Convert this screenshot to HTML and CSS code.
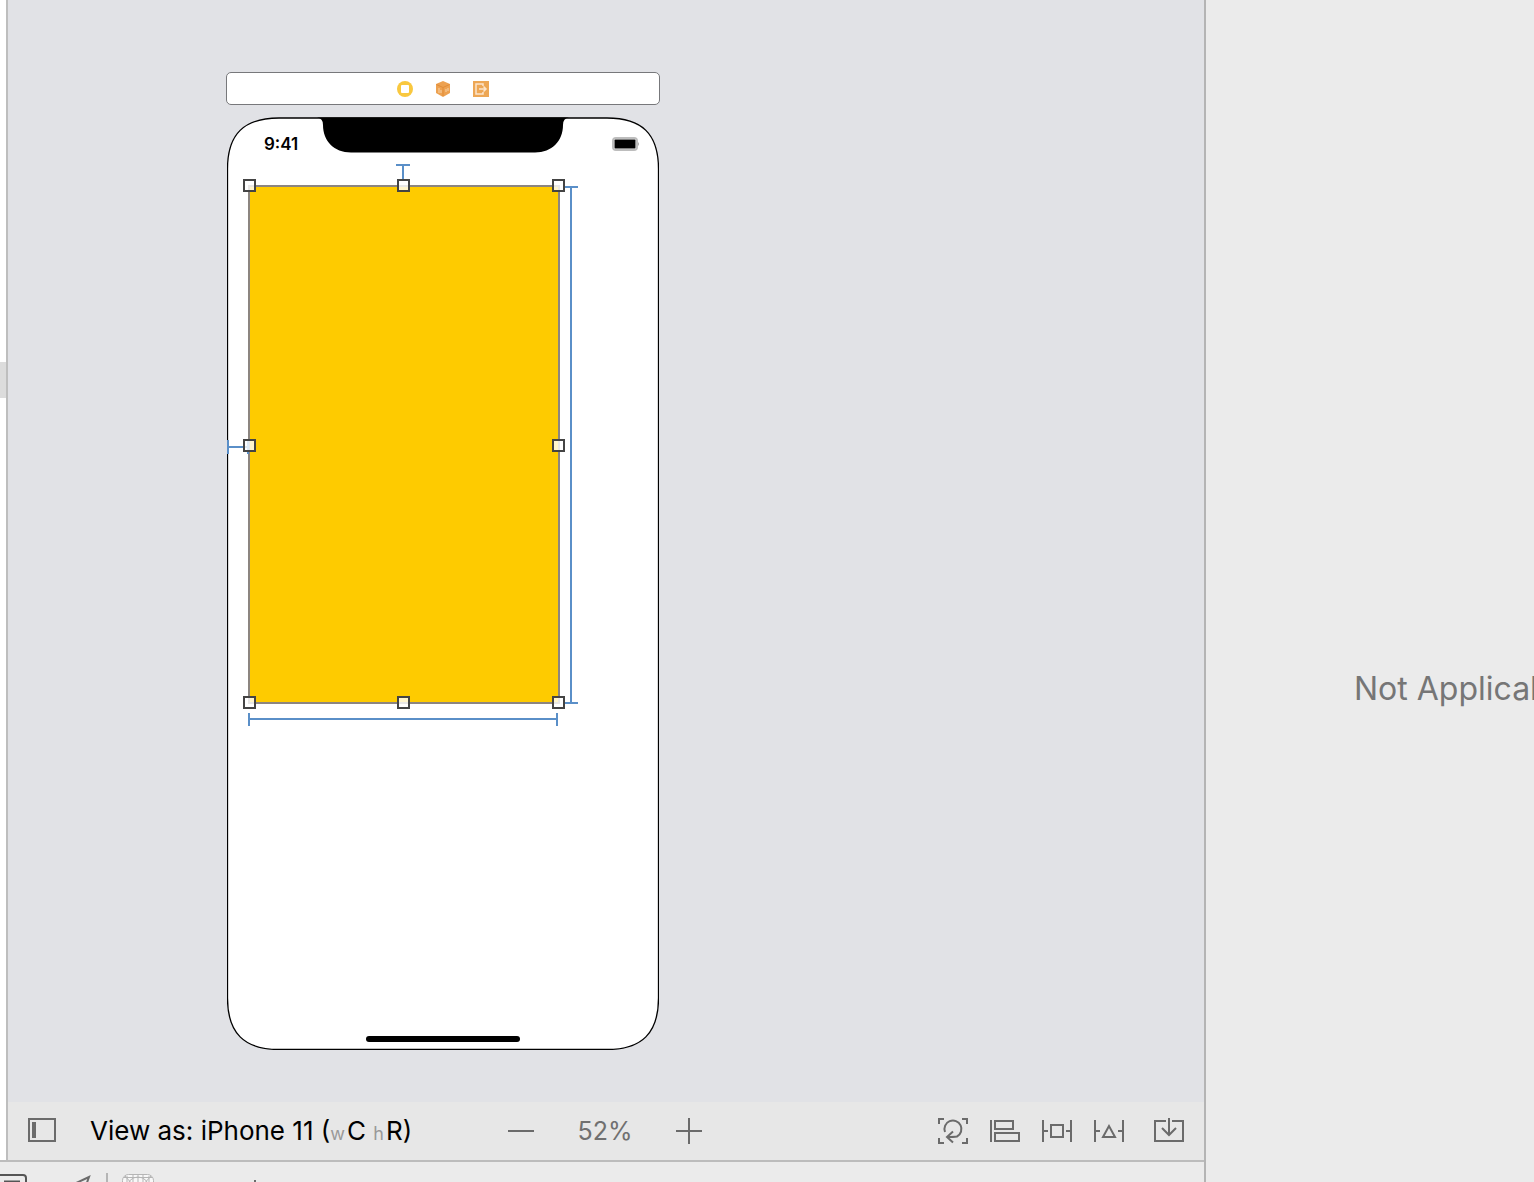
FILE: index.html
```html
<!DOCTYPE html>
<html lang="en">
<head>
<meta charset="utf-8">
<title>Interface Builder</title>
<link rel="stylesheet" href="styles.css">
</head>
<body>
<div class="window">
  <main class="workspace">
    <div class="editor">
      <div class="outline"><div class="outline-row"></div></div>
      <section class="stage">
        <div class="canvas">
          <div class="scene">
            <div class="dock">
              <svg width="18" height="18" viewBox="0 0 18 18"><circle cx="9" cy="9" r="8" fill="#f9c83f"/><rect x="5" y="5" width="8" height="8" rx="1" fill="#fff"/></svg>
              <svg width="18" height="18" viewBox="0 0 18 18"><path d="M9 1l7 3v9l-7 4-7-4V4z" fill="#eda150"/><path d="M2.500 4.500L9 7.500l6.500-3M9 7.500V16" fill="none" stroke="#e18c38"/><path d="M5 8v5M7 10v3M12 9v3M14 8v3" stroke="#f8d3a8" fill="none"/></svg>
              <svg width="18" height="18" viewBox="0 0 18 18"><rect x="1" y="1" width="16" height="16" fill="#eda755"/><path d="M11 6V4H4v10h7v-2M7 9h7M11.500 6.500L14 9l-2.500 2.500" fill="none" stroke="#fce5cc" stroke-width="1.500"/></svg>
            </div>
            <div class="phone">
              <svg class="phone-frame" viewBox="0 0 432 933">
                <path d="M.5 52C.5 17 17 1 52 1H380C415 1 431.500 17 431.500 52V881C431.500 916 415 932.500 380 932.500H52C17 932.500 .5 916 .5 881Z" fill="#fff" stroke="#000" stroke-width="1.300"/>
                <path d="M90 .5Q96 1 96 8C96 24 107 35.500 124 35.500H308C325 35.500 336 24 336 8Q336 1 342 .5Z" fill="#000"/>
              </svg>
              <div class="status">
                <span class="clock">9:41</span>
                <svg width="28" height="14" viewBox="0 0 28 14"><rect x="1" y="1" width="24" height="12" rx="3" fill="#fff" stroke="#bdbdbd" stroke-width="2"/><rect x="2.500" y="2.500" width="21" height="9" rx="1" fill="#000"/><path d="M26 5q2 2 0 4z" fill="#aaa"/></svg>
              </div>
              <div class="view"></div>
              <div class="home"></div>
              <svg class="guides" viewBox="0 0 432 933">
                <g class="constraint">
                  <path d="M169 48H183M176 48V62"/>
                  <path d="M338 70H351M344 70V586M338 586H351"/>
                  <path d="M22 596V609M22 602H330M330 596V609"/>
                  <path d="M1 323V337M1 330H21M21 323V337"/>
                </g>
                <g class="handle">
                  <rect x="17" y="63" width="11" height="11"/><rect x="171" y="63" width="11" height="11"/><rect x="326" y="63" width="11" height="11"/>
                  <rect x="17" y="323" width="11" height="11"/><rect x="326" y="323" width="11" height="11"/>
                  <rect x="17" y="580" width="11" height="11"/><rect x="171" y="580" width="11" height="11"/><rect x="326" y="580" width="11" height="11"/>
                </g>
              </svg>
            </div>
          </div>
        </div>
        <div class="toolbar">
          <div class="device">
            <button aria-label="Toggle outline"><svg width="28" height="26" viewBox="0 0 28 26"><path d="M1 1H27V23H1Z"/><path d="M6 4V20" stroke-width="4"/></svg></button>
            <button class="view-as">View as: iPhone 11 (<small>w</small>C <small>h</small>R)</button>
          </div>
          <div class="zoom">
            <button aria-label="Zoom out"><svg width="26" height="26" viewBox="0 0 26 26"><path d="M0 13H26"/></svg></button>
            <button class="percent">52%</button>
            <button aria-label="Zoom in"><svg width="26" height="26" viewBox="0 0 26 26"><path d="M0 13H26M13 0V26"/></svg></button>
          </div>
          <div class="layout">
            <button aria-label="Update frames"><svg width="32" height="32" viewBox="0 0 32 32"><path d="M2 9V4H7M25 4H30V9M30 23V28H25M7 28H2V23"/><path d="M8 17A8.500 8.500 0 1 1 20 21.500Q17 22 10 22M16 16.500L10 22L16 27.500"/></svg></button>
            <button aria-label="Align"><svg width="32" height="32" viewBox="0 0 32 32"><path d="M2 5V27M6 6H24V14H6ZM6 18H30V26H6Z"/></svg></button>
            <button aria-label="Add constraints"><svg width="32" height="32" viewBox="0 0 32 32"><path d="M2 5V27M30 5V27M2 16H7M25 16H30M10 10H22V22H10Z"/></svg></button>
            <button aria-label="Resolve issues"><svg width="32" height="32" viewBox="0 0 32 32"><path d="M2 5V27M30 5V27M2 16H7M25 16H30M16 11L10 22H22Z"/></svg></button>
            <button class="embed" aria-label="Embed in"><svg width="32" height="32" viewBox="0 0 32 32"><path d="M13 6H2V26H30V6H19M16 3V20M9 13L16 20L23 13"/></svg></button>
          </div>
        </div>
      </section>
    </div>
    <div class="debug">
      <button aria-label="View mode"><svg width="28" height="24" viewBox="0 0 28 24"><rect x="-8" y="2" width="34" height="24" rx="3" stroke="#555"/><path d="M4 9H20" stroke="#555" stroke-width="3"/></svg></button>
      <button class="location" aria-label="Simulate location"><svg width="20" height="24" viewBox="0 0 20 24"><path d="M0 11L15 4L10 18"/></svg></button>
      <span class="divider"></span>
      <button aria-label="Environment"><svg width="32" height="24" viewBox="0 0 32 24"><g stroke="#b5b5b5" stroke-width="1"><rect x=".5" y="1.500" width="31" height="31" rx="6" fill="#f8f8f8"/><path d="M2 4.500H30M5 3V24M11 1V24M16 1V24M21 1V24M27 3V24M3 3L12 13M29 3L20 13"/><circle cx="16" cy="15" r="11"/></g></svg></button>
      <button class="process" aria-label="Process"><svg width="20" height="24" viewBox="0 0 20 24"><path d="M10 7V24"/></svg></button>
    </div>
  </main>
  <aside class="inspector"><p>Not Applicable</p></aside>
</div>
</body>
</html>
```
FILE: styles.css
```css
* { box-sizing: border-box; }
body { margin: 0; font-family: Inter, "Liberation Sans", sans-serif; }
.window { display: flex; height: 100vh; overflow: hidden; }
.workspace { flex: 1; min-width: 0; display: flex; flex-direction: column; }
.editor { flex: 1; min-height: 0; display: flex; }
.outline { width: 8px; padding-top: 362px; background: #fff; border-right: 2px solid #bebebe; }
.outline-row { height: 36px; background: #dcdcdc; }
.stage { flex: 1; min-width: 0; display: flex; flex-direction: column; }
.canvas { flex: 1; min-height: 0; overflow: hidden; padding: 72px 218px 0; background: #e1e2e6; }
.scene { width: 434px; display: flex; flex-direction: column; align-items: center; gap: 12px; }
.dock { width: 100%; height: 33px; display: flex; align-items: center; justify-content: center; gap: 20px; background: #fff; border: 1px solid #77787b; border-radius: 5px; }
.phone { position: relative; width: 432px; height: 933px; }
.phone-frame, .guides { position: absolute; inset: 0; width: 100%; height: 100%; }
.status { position: relative; display: flex; align-items: center; justify-content: space-between; height: 68px; padding: 0 19px 14px 37px; }
.clock { font-size: 17px; font-weight: 600; line-height: 20px; }
.view { position: relative; width: 312px; height: 519px; margin-left: 21px; background: #fecb00; border: 2px solid #8c8580; }
.home { position: absolute; left: 139px; bottom: 8px; width: 154px; height: 6px; border-radius: 3px; background: #000; }
.constraint { fill: none; stroke: #5a8fc8; stroke-width: 2; }
.handle { fill: #fff; fill-opacity: .8; stroke: #444; stroke-width: 2; }
button { display: flex; align-items: center; padding: 0; border: 0; background: none; color: inherit; font: inherit; white-space: pre; }
button svg { fill: none; stroke: #6b6b6b; stroke-width: 2; }
.toolbar { flex: none; height: 58px; display: flex; align-items: center; padding: 0 19px 0 20px; background: #e7e7e7; font-size: 25px; line-height: 32px; }
.device { width: 480px; display: flex; align-items: center; gap: 34px; }
.view-as { display: flex; align-items: baseline; padding-top: 2px; font-size: 26px; }
.view-as small { padding-right: 2px; font-size: 18px; color: #999; }
.zoom { width: 194px; display: flex; align-items: center; justify-content: space-between; color: #707070; }
.layout { margin-left: auto; display: flex; gap: 20px; }
.embed { margin-left: 8px; }
.debug { height: 22px; display: flex; align-items: flex-start; overflow: hidden; padding-top: 11px; background: #ebebeb; border-top: 2px solid #bcbcbc; }
.location { margin: 0 12px 0 46px; }
.divider { width: 2px; height: 24px; margin-right: 14px; background: #b5b5b5; }
.process { margin-left: 91px; }
.inspector { flex: none; width: 330px; display: flex; align-items: center; overflow: hidden; padding: 196px 0 0 148px; background: #ebebeb; border-left: 2px solid #b4b4b4; }
.inspector p { margin: 0; color: #767676; font-size: 32px; line-height: 40px; white-space: nowrap; }
```
